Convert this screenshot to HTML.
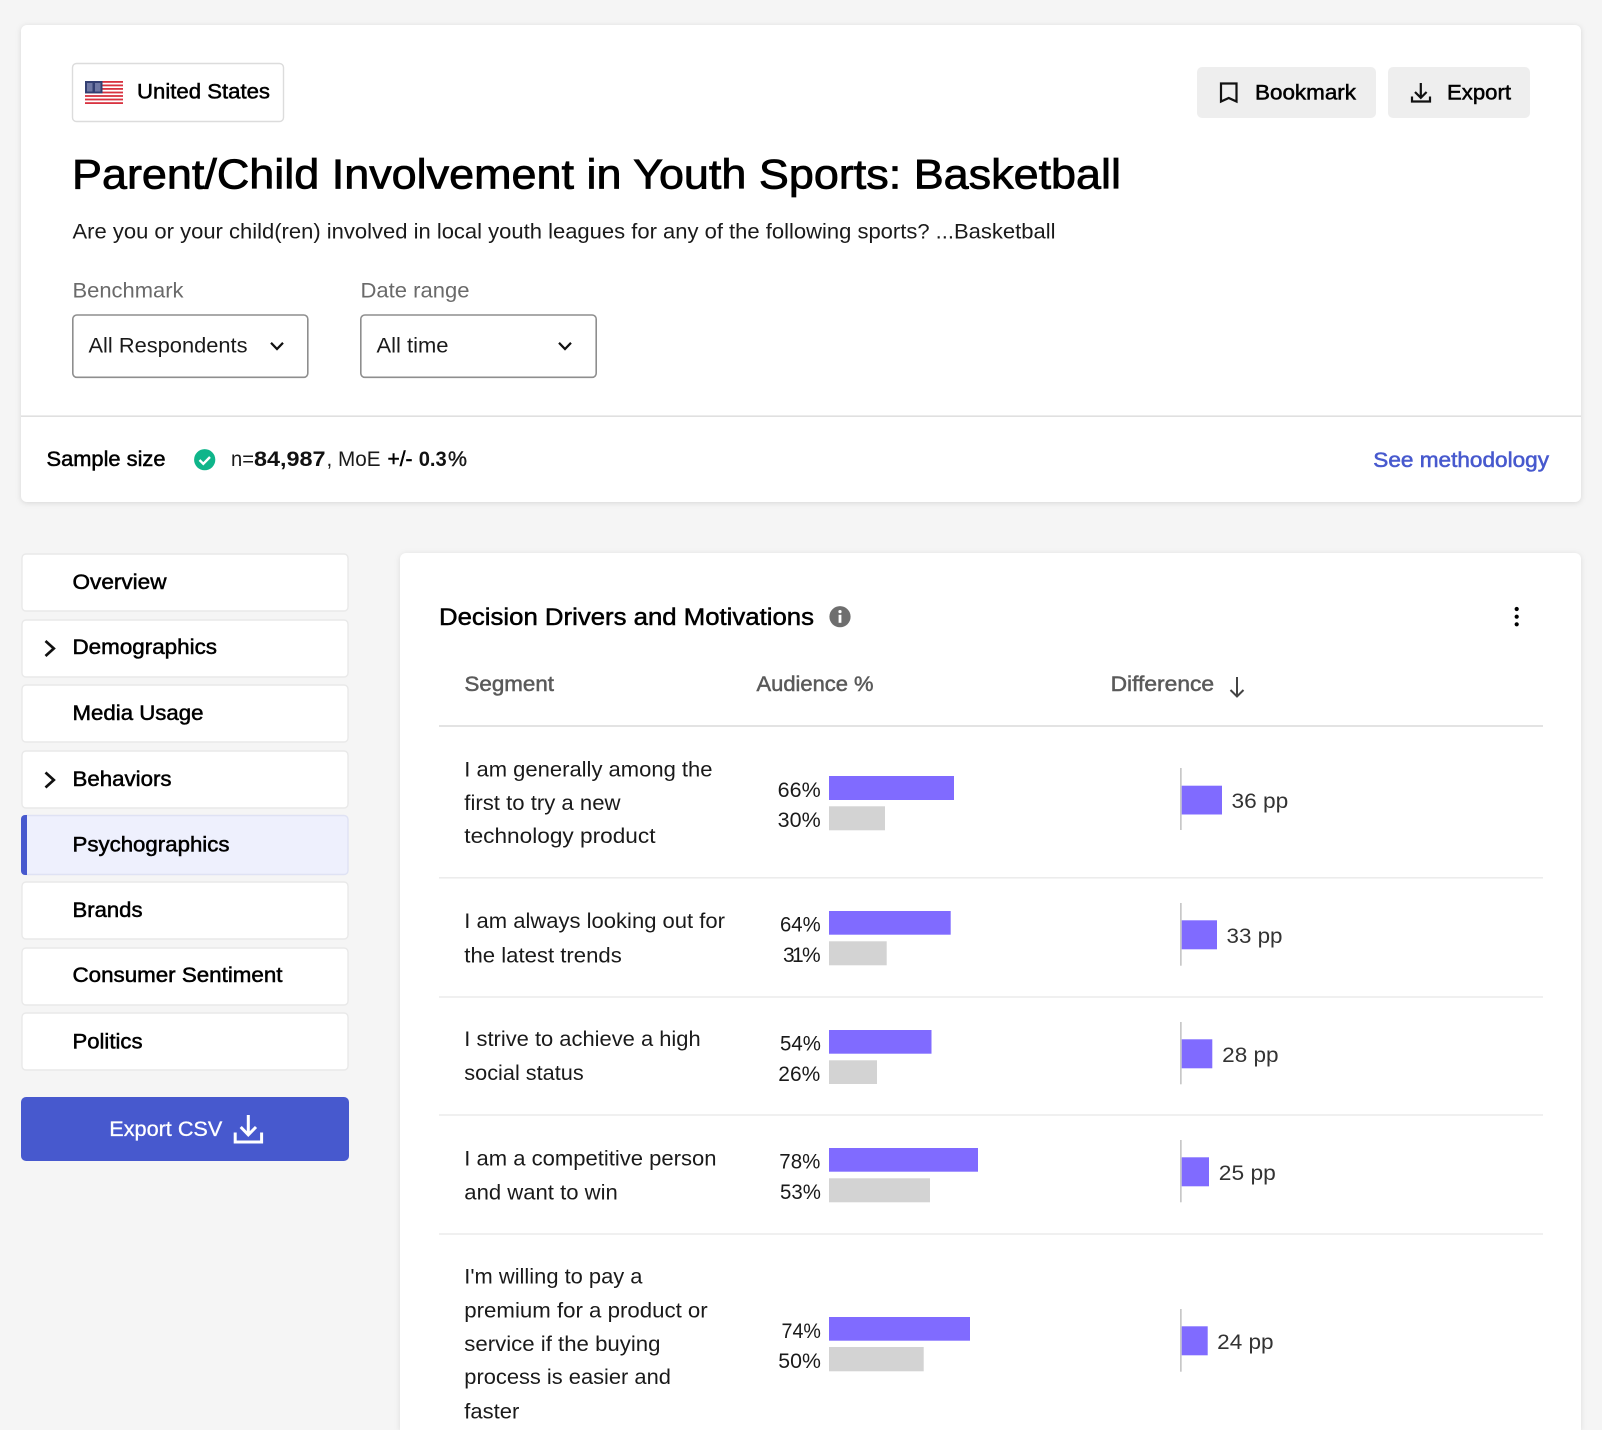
<!DOCTYPE html>
<html lang="en"><head><meta charset="utf-8"><title>Parent/Child Involvement in Youth Sports: Basketball</title>
<style>
html,body{margin:0;padding:0;background:#f5f5f5;width:1602px;height:1430px;overflow:hidden}
svg{display:block}
text{font-family:"Liberation Sans",Arial,sans-serif;font-size:21px;fill:#1a1a1a}
.m{stroke:#000;stroke-width:.5px;fill:#000}
.g{fill:#6a6a6a}
.gm{fill:#5a5a5a;stroke:#5a5a5a;stroke-width:.5px}
.pp{fill:#333}
.box{fill:#fff;stroke:#e9e9e9;stroke-width:1.4px}
.sep{fill:#ececec}
.p{fill:#806bff}
.q{fill:#d3d3d3}
.v{fill:#c8c8c8}
.ln{fill:none;stroke:#111;stroke-width:2.2}
</style></head><body>
<svg xmlns="http://www.w3.org/2000/svg" width="1602" height="1430" viewBox="0 0 1602 1430">
<rect width="1602" height="1430" fill="#f5f5f5"/>

<!-- top card -->
<rect x="21" y="25" width="1560" height="477" rx="6" fill="#fff" style="filter:drop-shadow(0 1px 3px rgba(0,0,0,.12))"/>
<rect x="21" y="415.5" width="1560" height="1.3" fill="#d9d9d9"/>

<!-- country pill -->
<rect x="72.5" y="63.5" width="211" height="58" rx="4" fill="#fff" stroke="#dcdcdc" stroke-width="1.4"/>
<g>
<rect x="85" y="81" width="38" height="23" fill="#fff"/>
<g fill="#d8323f">
<rect x="85" y="81" width="38" height="1.8"/><rect x="85" y="84.5" width="38" height="1.8"/><rect x="85" y="88" width="38" height="1.8"/><rect x="85" y="91.6" width="38" height="1.8"/><rect x="85" y="95.1" width="38" height="1.8"/><rect x="85" y="98.6" width="38" height="1.8"/><rect x="85" y="102.2" width="38" height="1.8"/>
</g>
<rect x="85" y="81" width="17.5" height="12.4" fill="#333f72"/>
<rect x="87" y="83" width="5.5" height="8.5" fill="#6f78a4"/><rect x="95" y="83" width="5.5" height="8.5" fill="#6f78a4"/>
</g>
<text class="m" x="137" y="98.6" textLength="133" lengthAdjust="spacingAndGlyphs">United States</text>

<!-- top buttons -->
<rect x="1197" y="67" width="179" height="51" rx="5" fill="#eee"/>
<rect x="1388" y="67" width="142" height="51" rx="5" fill="#eee"/>
<path class="ln" d="M1221 83.5h15.5v18l-7.75-3.5l-7.75 3.5z"/>
<text class="m" x="1255" y="99.5" textLength="101" lengthAdjust="spacingAndGlyphs">Bookmark</text>
<path class="ln" d="M1420.8 83v14.5M1415 92l5.8 5.8 5.8-5.8M1412 96.5v5h18v-5"/>
<text class="m" x="1447" y="99.5" textLength="64" lengthAdjust="spacingAndGlyphs">Export</text>

<!-- title -->
<text x="72" y="188.3" textLength="1049" lengthAdjust="spacingAndGlyphs" style="font-size:42px;fill:#000;stroke:#000;stroke-width:.8px">Parent/Child Involvement in Youth Sports: Basketball</text>
<text x="72.5" y="238.3" textLength="983" lengthAdjust="spacingAndGlyphs">Are you or your child(ren) involved in local youth leagues for any of the following sports? ...Basketball</text>

<!-- filters -->
<text class="g" x="72.5" y="297.3" textLength="111" lengthAdjust="spacingAndGlyphs">Benchmark</text>
<text class="g" x="360.5" y="297.3" textLength="109" lengthAdjust="spacingAndGlyphs">Date range</text>
<rect x="72.8" y="315" width="235" height="62.3" rx="4" fill="#fff" stroke="#8e8e8e" stroke-width="1.6"/>
<rect x="360.8" y="315" width="235.4" height="62.3" rx="4" fill="#fff" stroke="#8e8e8e" stroke-width="1.6"/>
<text x="88.5" y="352.3" textLength="159" lengthAdjust="spacingAndGlyphs">All Respondents</text>
<text x="376.5" y="352.3" textLength="72" lengthAdjust="spacingAndGlyphs">All time</text>
<path class="ln" d="M271 342.8l6 6.2 6-6.2"/>
<path class="ln" d="M559 342.8l6 6.2 6-6.2"/>

<!-- sample row -->
<text class="m" x="46.5" y="466" textLength="119" lengthAdjust="spacingAndGlyphs">Sample size</text>
<circle cx="204.7" cy="459.7" r="10.6" fill="#0fb58a"/>
<path d="M199.5 460l3.8 3.8 6.7-6.8" fill="none" stroke="#fff" stroke-width="2.4"/>
<text x="231" y="466" textLength="23" lengthAdjust="spacingAndGlyphs">n=</text>
<text x="254" y="466" textLength="71.5" lengthAdjust="spacingAndGlyphs" style="font-weight:700;fill:#111">84,987</text>
<text x="326.5" y="466" textLength="54" lengthAdjust="spacingAndGlyphs">, MoE</text>
<text class="m" x="387.5" y="466" textLength="25" lengthAdjust="spacingAndGlyphs">+/-</text>
<text x="418.7" y="466" textLength="28" lengthAdjust="spacingAndGlyphs" style="font-weight:700;fill:#111">0.3</text>
<text x="448" y="466" textLength="19" lengthAdjust="spacingAndGlyphs" style="stroke:#111;stroke-width:.4px">%</text>
<text x="1373.3" y="467.2" textLength="175.7" lengthAdjust="spacingAndGlyphs" style="fill:#4759ce;stroke:#4759ce;stroke-width:.55px">See methodology</text>

<!-- sidebar -->
<rect class="box" x="22" y="554" width="326" height="57" rx="4"/>
<rect class="box" x="22" y="620" width="326" height="57" rx="4"/>
<rect class="box" x="22" y="685" width="326" height="57" rx="4"/>
<rect class="box" x="22" y="751" width="326" height="57" rx="4"/>
<rect x="22" y="815.5" width="326" height="59" rx="4" fill="#eef0fd" stroke="#dfe2f4" stroke-width="1.4"/>
<path d="M27 815H25a4 4 0 0 0-4 4V871a4 4 0 0 0 4 4H27z" fill="#4759ce"/>
<rect class="box" x="22" y="882" width="326" height="57" rx="4"/>
<rect class="box" x="22" y="948" width="326" height="57" rx="4"/>
<rect class="box" x="22" y="1013" width="326" height="57" rx="4"/>
<text class="m" x="72.5" y="589" textLength="94" lengthAdjust="spacingAndGlyphs">Overview</text>
<text class="m" x="72.5" y="653.8" textLength="144.5" lengthAdjust="spacingAndGlyphs">Demographics</text>
<text class="m" x="72.5" y="720" textLength="131" lengthAdjust="spacingAndGlyphs">Media Usage</text>
<text class="m" x="72.5" y="786" textLength="99" lengthAdjust="spacingAndGlyphs">Behaviors</text>
<text class="m" x="72.5" y="851.7" textLength="157" lengthAdjust="spacingAndGlyphs">Psychographics</text>
<text class="m" x="72.5" y="917" textLength="70" lengthAdjust="spacingAndGlyphs">Brands</text>
<text class="m" x="72.5" y="982" textLength="210" lengthAdjust="spacingAndGlyphs">Consumer Sentiment</text>
<text class="m" x="72.5" y="1048.3" textLength="70" lengthAdjust="spacingAndGlyphs">Politics</text>
<path class="ln" style="stroke-width:2.7" d="M45.5 641L53.8 648.5 45.5 656"/>
<path class="ln" style="stroke-width:2.7" d="M45.5 772.5L53.8 780 45.5 787.5"/>
<rect x="21" y="1097" width="328" height="64" rx="5" fill="#4759ce"/>
<text x="109.3" y="1136" textLength="113" lengthAdjust="spacingAndGlyphs" style="fill:#fff;stroke:#fff;stroke-width:.3px">Export CSV</text>
<path d="M248.3 1115v20M240.7 1127l7.6 7.8 7.7-7.8M235.2 1132.5v9.5h26.4v-9.5" fill="none" stroke="#fff" stroke-width="3"/>

<!-- main card -->
<path d="M400 1430V559a6 6 0 0 1 6-6H1575a6 6 0 0 1 6 6V1430z" fill="#fff" style="filter:drop-shadow(0 1px 3px rgba(0,0,0,.1))"/>
<text x="439" y="625" textLength="375" lengthAdjust="spacingAndGlyphs" style="font-size:24px;fill:#000;stroke:#000;stroke-width:.5px">Decision Drivers and Motivations</text>
<circle cx="840" cy="616.7" r="10.6" fill="#6e6e6e"/>
<circle cx="840" cy="611.6" r="1.6" fill="#fff"/>
<rect x="838.6" y="614.8" width="2.8" height="8" fill="#fff"/>
<circle cx="1516.7" cy="609" r="2.1" fill="#000"/><circle cx="1516.7" cy="616.7" r="2.1" fill="#000"/><circle cx="1516.7" cy="624.3" r="2.1" fill="#000"/>

<text class="gm" x="464.5" y="691" textLength="89.5" lengthAdjust="spacingAndGlyphs">Segment</text>
<text class="gm" x="756.5" y="691" textLength="117" lengthAdjust="spacingAndGlyphs">Audience %</text>
<text class="gm" x="1110.6" y="691" textLength="103.5" lengthAdjust="spacingAndGlyphs">Difference</text>
<path d="M1237 677v19M1230.5 690l6.5 6.5 6.5-6.5" fill="none" stroke="#444" stroke-width="2"/>
<rect x="439" y="725.2" width="1104" height="1.6" fill="#dcdcdc"/>

<!-- row 1 -->
<text x="464.3" y="776.7" textLength="248.2" lengthAdjust="spacingAndGlyphs">I am generally among the</text>
<text x="464.3" y="810" textLength="156.2" lengthAdjust="spacingAndGlyphs">first to try a new</text>
<text x="464.3" y="842.8" textLength="191.2" lengthAdjust="spacingAndGlyphs">technology product</text>
<text x="777.7" y="797" textLength="43" lengthAdjust="spacingAndGlyphs">66%</text>
<text x="777.7" y="827" textLength="43" lengthAdjust="spacingAndGlyphs">30%</text>
<rect class="p" x="829" y="776" width="125" height="24"/>
<rect class="q" x="829" y="806.3" width="56" height="24"/>
<rect class="v" x="1180" y="768" width="1.7" height="62"/>
<rect class="p" x="1181.7" y="785.7" width="40.3" height="28.8"/>
<text class="pp" x="1231.5" y="808" textLength="56.8" lengthAdjust="spacingAndGlyphs">36 pp</text>
<rect class="sep" x="439" y="877" width="1104" height="1.6"/>

<!-- row 2 -->
<text x="464.3" y="928" textLength="260.7" lengthAdjust="spacingAndGlyphs">I am always looking out for</text>
<text x="464.3" y="962.3" textLength="157.5" lengthAdjust="spacingAndGlyphs">the latest trends</text>
<text x="780" y="931.5" textLength="40.7" lengthAdjust="spacingAndGlyphs">64%</text>
<text x="783 792 802" y="962">31%</text>
<rect class="p" x="829" y="911" width="121.7" height="23.7"/>
<rect class="q" x="829" y="941.3" width="57.7" height="24"/>
<rect class="v" x="1180" y="903" width="1.7" height="62.7"/>
<rect class="p" x="1181.7" y="920.3" width="35.3" height="29"/>
<text class="pp" x="1226.5" y="942.9" textLength="56" lengthAdjust="spacingAndGlyphs">33 pp</text>
<rect class="sep" x="439" y="996.2" width="1104" height="1.6"/>

<!-- row 3 -->
<text x="464.3" y="1046" textLength="236.4" lengthAdjust="spacingAndGlyphs">I strive to achieve a high</text>
<text x="464.3" y="1080" textLength="119.4" lengthAdjust="spacingAndGlyphs">social status</text>
<text x="780" y="1050.5" textLength="40.9" lengthAdjust="spacingAndGlyphs">54%</text>
<text x="778.3" y="1080.8" textLength="41.9" lengthAdjust="spacingAndGlyphs">26%</text>
<rect class="p" x="829" y="1030" width="102.5" height="23.7"/>
<rect class="q" x="829" y="1060.3" width="48" height="23.7"/>
<rect class="v" x="1180" y="1022" width="1.7" height="62.3"/>
<rect class="p" x="1181.7" y="1039.3" width="30.6" height="29"/>
<text class="pp" x="1222.2" y="1061.9" textLength="56.4" lengthAdjust="spacingAndGlyphs">28 pp</text>
<rect class="sep" x="439" y="1114.2" width="1104" height="1.6"/>

<!-- row 4 -->
<text x="464.3" y="1165.3" textLength="252.2" lengthAdjust="spacingAndGlyphs">I am a competitive person</text>
<text x="464.3" y="1199.3" textLength="153.5" lengthAdjust="spacingAndGlyphs">and want to win</text>
<text x="779.3" y="1168.5" textLength="41" lengthAdjust="spacingAndGlyphs">78%</text>
<text x="780" y="1199" textLength="40.9" lengthAdjust="spacingAndGlyphs">53%</text>
<rect class="p" x="829" y="1148" width="149" height="23.7"/>
<rect class="q" x="829" y="1178.3" width="101" height="24"/>
<rect class="v" x="1180" y="1140" width="1.7" height="62.3"/>
<rect class="p" x="1181.7" y="1157.3" width="27.3" height="29"/>
<text class="pp" x="1218.8" y="1179.9" textLength="57" lengthAdjust="spacingAndGlyphs">25 pp</text>
<rect class="sep" x="439" y="1233.2" width="1104" height="1.6"/>

<!-- row 5 -->
<text x="464.3" y="1283.3" textLength="178.2" lengthAdjust="spacingAndGlyphs">I'm willing to pay a</text>
<text x="464.3" y="1317.3" textLength="243.4" lengthAdjust="spacingAndGlyphs">premium for a product or</text>
<text x="464.3" y="1351" textLength="196.2" lengthAdjust="spacingAndGlyphs">service if the buying</text>
<text x="464.3" y="1384" textLength="206.6" lengthAdjust="spacingAndGlyphs">process is easier and</text>
<text x="464.3" y="1418.3" textLength="55" lengthAdjust="spacingAndGlyphs">faster</text>
<text x="781.5" y="1338" textLength="39.4" lengthAdjust="spacingAndGlyphs">74%</text>
<text x="778.3" y="1368" textLength="42.6" lengthAdjust="spacingAndGlyphs">50%</text>
<rect class="p" x="829" y="1317" width="141" height="23.7"/>
<rect class="q" x="829" y="1347" width="94.7" height="24.3"/>
<rect class="v" x="1180" y="1309" width="1.7" height="62.7"/>
<rect class="p" x="1181.7" y="1326.3" width="26" height="29"/>
<text class="pp" x="1217.2" y="1349" textLength="56.4" lengthAdjust="spacingAndGlyphs">24 pp</text>
</svg>
</body></html>
